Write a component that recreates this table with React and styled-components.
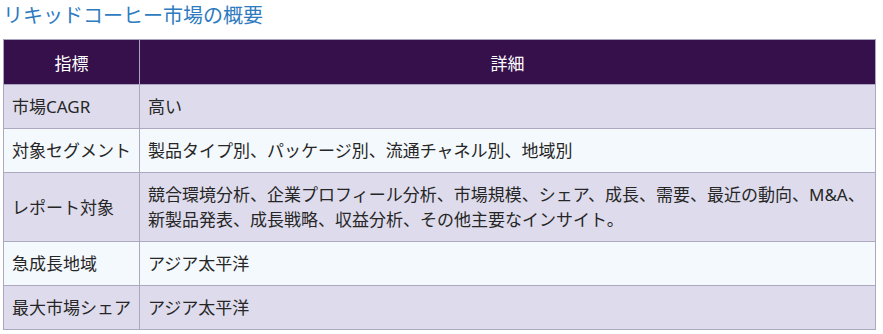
import React from "react";
import styled, { createGlobalStyle } from "styled-components";

const GlobalStyle = createGlobalStyle`
  body {
    margin: 0;
    background: #ffffff;
    font-family: "Noto Sans", "Noto Sans CJK JP", sans-serif;
  }
`;

const Wrapper = styled.div`
  padding: 0 7px 0 3px;
`;

const Title = styled.h2`
  margin: 0;
  height: 39px;
  line-height: 32px;
  font-size: 20px;
  font-weight: 400;
  color: #2e7bbf;
  font-family: "Noto Sans", "Noto Sans CJK JP", sans-serif;
`;

const Table = styled.table`
  width: 873px;
  border-collapse: collapse;
  font-size: 17px;
  color: #262626;
`;

const HeadCell = styled.th`
  height: 44px;
  padding: 0 10px;
  background: #36104a;
  color: #ffffff;
  font-weight: 400;
  text-align: center;
  border: 1px solid #a9a4bf;
  width: ${(p) => (p.$narrow ? "115px" : "auto")};
`;

const Row = styled.tr`
  background: ${(p) => (p.$odd ? "#dedcec" : "#f4f9fd")};
`;

const Cell = styled.td`
  height: ${(p) => (p.$tall ? "68px" : "43px")};
  padding: 0 8px 0 8px;
  line-height: 25px;
  border: 1px solid #aca8c0;
  vertical-align: middle;
  white-space: nowrap;
`;

const rows = [
  ["市場CAGR", ["高い"]],
  ["対象セグメント", ["製品タイプ別、パッケージ別、流通チャネル別、地域別"]],
  [
    "レポート対象",
    [
      "競合環境分析、企業プロフィール分析、市場規模、シェア、成長、需要、最近の動向、M&A、",
      "新製品発表、成長戦略、収益分析、その他主要なインサイト。",
    ],
  ],
  ["急成長地域", ["アジア太平洋"]],
  ["最大市場シェア", ["アジア太平洋"]],
];

const App = () => {
  return (
    <Wrapper>
      <GlobalStyle />
      <Title>リキッドコーヒー市場の概要</Title>
      <Table>
        <thead>
          <tr>
            <HeadCell $narrow>指標</HeadCell>
            <HeadCell>詳細</HeadCell>
          </tr>
        </thead>
        <tbody>
          {rows.map(([label, lines], i) => (
            <Row key={label} $odd={i % 2 === 0}>
              <Cell $tall={lines.length > 1}>{label}</Cell>
              <Cell $tall={lines.length > 1}>
                {lines.map((l, j) => (
                  <React.Fragment key={j}>
                    {j > 0 && <br />}
                    {l}
                  </React.Fragment>
                ))}
              </Cell>
            </Row>
          ))}
        </tbody>
      </Table>
    </Wrapper>
  );
};

export default App;
